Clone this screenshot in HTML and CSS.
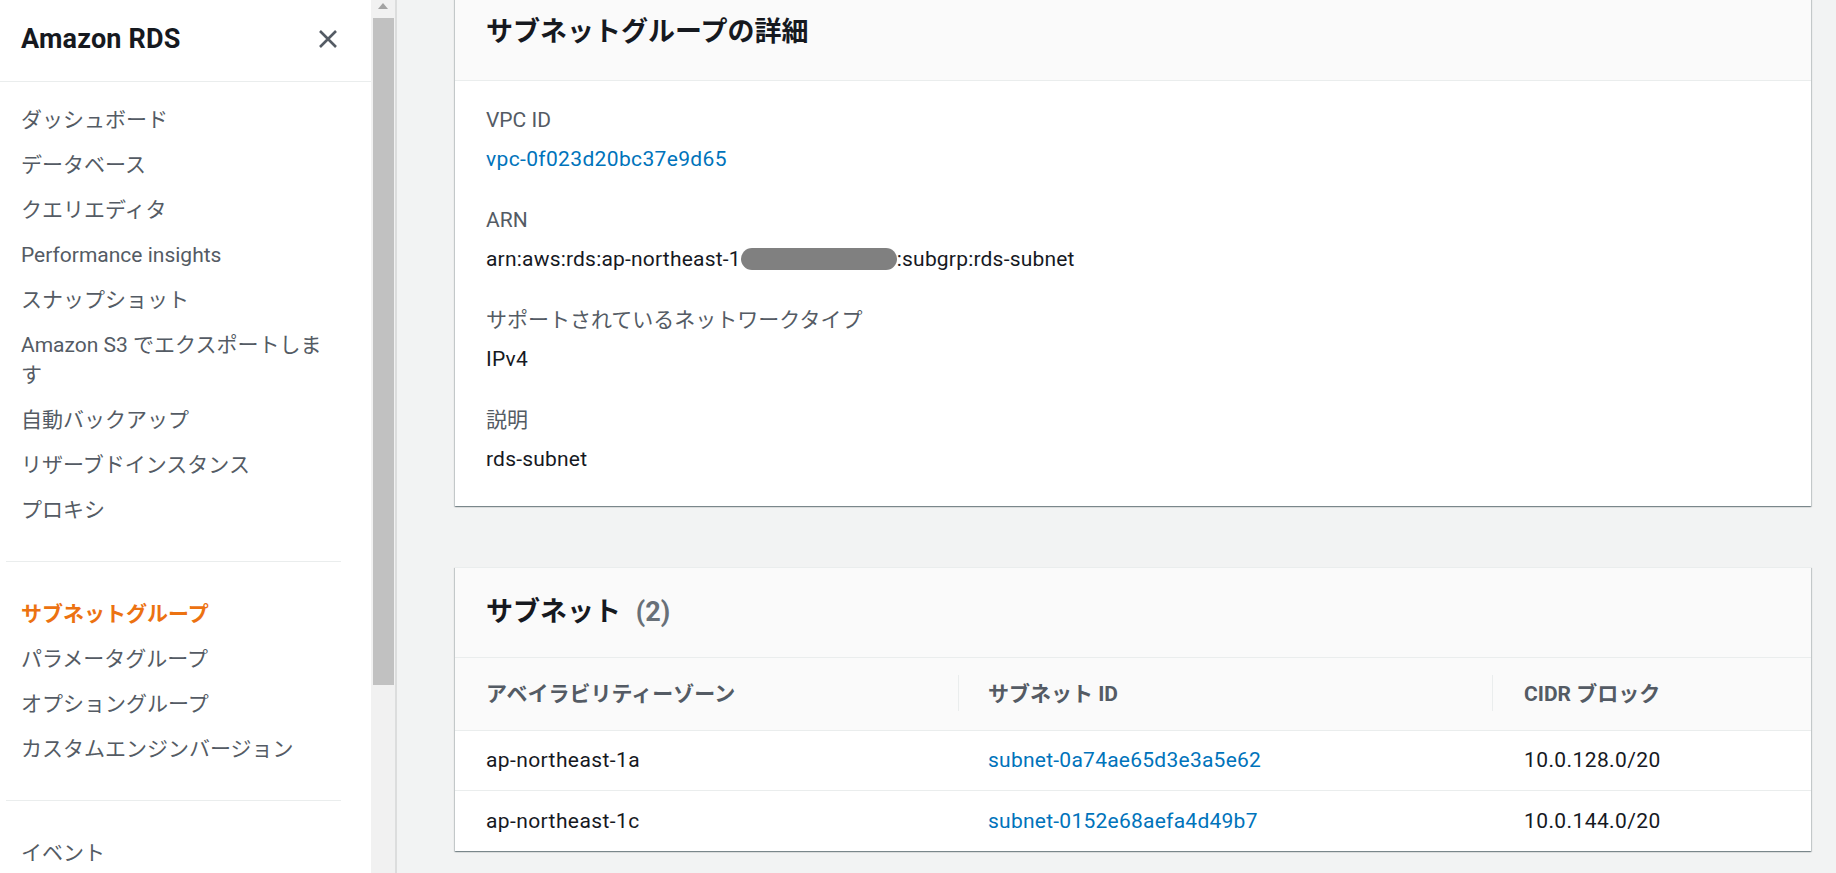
FILE: index.html
```html
<!DOCTYPE html>
<html lang="ja">
<head>
<meta charset="utf-8">
<title>Amazon RDS - サブネットグループ</title>
<link rel="stylesheet" href="styles.css">
</head>
<body>
<div class="app">
  <aside class="sidebar">
    <nav class="nav">
      <div class="nav-header">
        <span class="nav-title">Amazon RDS</span>
        <button class="nav-close" aria-label="閉じる">
          <svg width="20" height="20" viewBox="0 0 20 20"><path d="M2 2 L18 18 M18 2 L2 18" stroke="#545b64" stroke-width="2.6" fill="none"/></svg>
        </button>
      </div>
      <ul class="nav-list nav-list-first">
        <li>ダッシュボード</li>
        <li>データベース</li>
        <li>クエリエディタ</li>
        <li>Performance insights</li>
        <li>スナップショット</li>
        <li>Amazon S3 でエクスポートします</li>
        <li>自動バックアップ</li>
        <li>リザーブドインスタンス</li>
        <li>プロキシ</li>
      </ul>
      <hr class="nav-divider">
      <ul class="nav-list">
        <li class="active">サブネットグループ</li>
        <li>パラメータグループ</li>
        <li>オプショングループ</li>
        <li>カスタムエンジンバージョン</li>
      </ul>
      <hr class="nav-divider">
      <ul class="nav-list">
        <li>イベント</li>
      </ul>
    </nav>
    <div class="scrollbar">
      <div class="scroll-arrow"></div>
      <div class="scroll-thumb"></div>
    </div>
  </aside>
  <main class="content">
    <section class="card card-details">
      <div class="card-header card-header-first">
        <h2 class="card-title">サブネットグループの詳細</h2>
      </div>
      <div class="card-body">
        <div class="field">
          <div class="field-label">VPC ID</div>
          <div class="field-value"><a class="link">vpc-0f023d20bc37e9d65</a></div>
        </div>
        <div class="field">
          <div class="field-label">ARN</div>
          <div class="field-value">arn:aws:rds:ap-northeast-1<span class="redacted"></span>:subgrp:rds-subnet</div>
        </div>
        <div class="field">
          <div class="field-label">サポートされているネットワークタイプ</div>
          <div class="field-value">IPv4</div>
        </div>
        <div class="field">
          <div class="field-label">説明</div>
          <div class="field-value">rds-subnet</div>
        </div>
      </div>
    </section>

    <section class="card card-subnets">
      <div class="card-header">
        <h2 class="card-title">サブネット <span class="counter">(2)</span></h2>
      </div>
      <table class="table">
        <colgroup>
          <col class="col-az">
          <col class="col-id">
          <col class="col-cidr">
        </colgroup>
        <thead>
          <tr>
            <th>アベイラビリティーゾーン</th>
            <th class="sep">サブネット ID</th>
            <th class="sep sep-last">CIDR ブロック</th>
          </tr>
        </thead>
        <tbody>
          <tr>
            <td>ap-northeast-1a</td>
            <td class="c2"><a class="link">subnet-0a74ae65d3e3a5e62</a></td>
            <td class="c3">10.0.128.0/20</td>
          </tr>
          <tr>
            <td>ap-northeast-1c</td>
            <td class="c2"><a class="link">subnet-0152e68aefa4d49b7</a></td>
            <td class="c3">10.0.144.0/20</td>
          </tr>
        </tbody>
      </table>
    </section>
  </main>
</div>
</body>
</html>
```

FILE: styles.css
```css
* { box-sizing: border-box; }

html, body {
  margin: 0;
  padding: 0;
  height: 873px;
  overflow: hidden;
}

body {
  font-family: Roboto, "Noto Sans CJK JP", sans-serif;
  font-size: 21px;
  line-height: 30px;
  color: #16191f;
  background: #f2f3f3;
}

.app {
  display: flex;
  height: 873px;
}

/* ---------- Sidebar ---------- */
.sidebar {
  display: flex;
  flex-shrink: 0;
  height: 873px;
  border-right: 2px solid #dcdddd;
}

.nav {
  width: 371px;
  background: #ffffff;
  overflow: hidden;
}

.nav-header {
  height: 82px;
  display: flex;
  align-items: center;
  justify-content: space-between;
  padding: 0 33px 4px 21px;
  border-bottom: 1px solid #eaeded;
}

.nav-title {
  font-size: 27px;
  line-height: 36px;
  font-weight: 700;
  color: #16191f;
  letter-spacing: 0.2px;
}

.nav-close {
  border: 0;
  background: transparent;
  padding: 0;
  width: 20px;
  height: 20px;
  display: flex;
}

.nav-list {
  list-style: none;
  margin: 0;
  padding: 0 30px 0 21px;
}

.nav-list-first {
  padding-top: 15px;
}

.nav-list li {
  padding: 7.5px 0;
  color: #545b64;
}

.nav-list li.active {
  color: #ec7211;
  font-weight: 700;
}

.nav-divider {
  border: 0;
  border-top: 1px solid #eaeded;
  margin: 29px 30px 29px 6px;
  height: 0;
}

.scrollbar {
  width: 24px;
  background: #f1f1f1;
  display: flex;
  flex-direction: column;
}

.scroll-arrow {
  width: 0;
  height: 0;
  margin: 3px 0 9px 7px;
  border-left: 5.5px solid transparent;
  border-right: 5.5px solid transparent;
  border-bottom: 6px solid #a3a3a3;
}

.scroll-thumb {
  width: 21px;
  height: 667px;
  margin-left: 2px;
  background: #c1c1c1;
}

/* ---------- Content ---------- */
.content {
  flex: 1;
  padding: 0 25px 0 58px;
  overflow: hidden;
}

.card {
  background: #ffffff;
  border-top: 1px solid #eaeded;
  box-shadow: 0 1px 1px 0 rgba(0, 28, 36, 0.3),
              1px 1px 1px 0 rgba(0, 28, 36, 0.15),
              -1px 1px 1px 0 rgba(0, 28, 36, 0.15);
}

.card-details {
  margin-top: -9px;
}

.card-subnets {
  margin-top: 61px;
}

.card-header {
  background: #fafafa;
  border-bottom: 1px solid #eaeded;
  padding: 26px 31px 27px;
}

.card-header-first {
  padding: 22px 31px 30px;
}

.card-title {
  margin: 0;
  font-size: 27px;
  line-height: 36px;
  font-weight: 700;
  color: #16191f;
}

.counter {
  color: #687078;
  font-weight: 700;
  margin-left: 8px;
}

.card-body {
  padding: 24px 31px 32px;
  display: flex;
  flex-direction: column;
  gap: 31px;
}

.field {
  display: flex;
  flex-direction: column;
  gap: 9px;
}

.field-label {
  color: #545b64;
}

.field-value {
  color: #16191f;
  white-space: nowrap;
  letter-spacing: 0.2px;
}

.field-value .link {
  letter-spacing: 0.35px;
}

.link {
  color: #0073bb;
  text-decoration: none;
}

.redacted {
  display: inline-block;
  width: 156px;
  height: 22px;
  border-radius: 11px;
  background: #808080;
  vertical-align: -4px;
}

/* ---------- Table ---------- */
.table {
  width: 100%;
  border-collapse: collapse;
  table-layout: fixed;
}

.col-az { width: 503px; }
.col-id { width: 534px; }

.table th {
  background: #fafafa;
  height: 72px;
  padding: 0 0 0 31px;
  text-align: left;
  font-weight: 700;
  color: #545b64;
  border-bottom: 1px solid #eaeded;
  position: relative;
}

.table th.sep { padding-left: 30px; }
.table th.sep-last { padding-left: 32px; }

.table th.sep::before {
  content: "";
  position: absolute;
  left: 0;
  top: 17px;
  width: 1px;
  height: 36px;
  background: #eaeded;
}

.table td {
  height: 60px;
  padding: 0 0 0 31px;
  border-bottom: 1px solid #eaeded;
  white-space: nowrap;
  letter-spacing: 0.4px;
}

.table td .link {
  letter-spacing: 0.25px;
}

.table td.c2 { padding-left: 30px; }
.table td.c3 { padding-left: 32px; }

.table tbody tr:last-child td {
  border-bottom: 0;
  height: 61px;
}
```
